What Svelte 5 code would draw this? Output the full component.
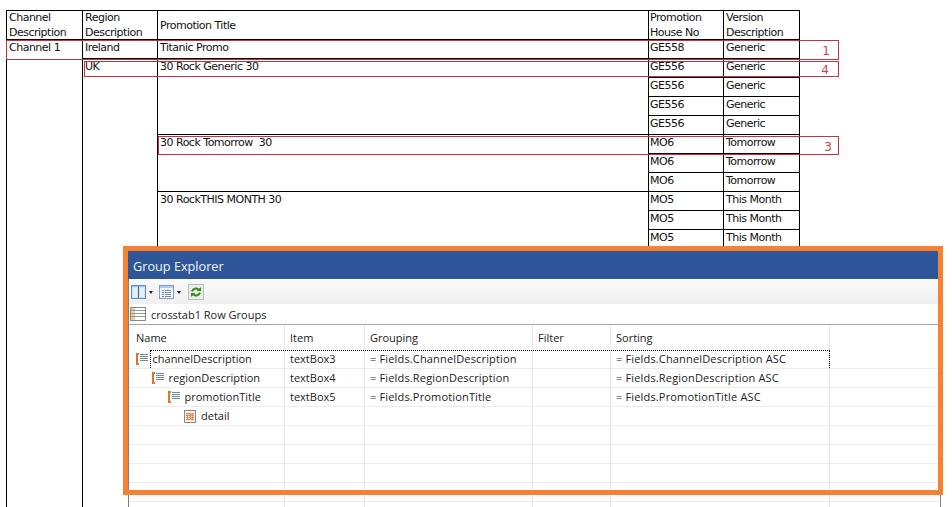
<script>
	const promos = [
		{ title: 'Titanic Promo', house: 'GE558', version: 'Generic', count: 1, region: 'Ireland' },
		{ title: '30 Rock Generic 30', house: 'GE556', version: 'Generic', count: 4, region: 'UK' },
		{ title: '30 Rock Tomorrow  30', house: 'MO6', version: 'Tomorrow', count: 3 },
		{ title: '30 RockTHIS MONTH 30', house: 'MO5', version: 'This Month', count: 3 }
	];

	const notes = [
		{ id: 'one', label: '1' },
		{ id: 'four', label: '4' },
		{ id: 'three', label: '3' }
	];

	const groups = [
		{ name: 'channelDescription', item: 'textBox3', field: 'ChannelDescription', depth: 0 },
		{ name: 'regionDescription', item: 'textBox4', field: 'RegionDescription', depth: 1 },
		{ name: 'promotionTitle', item: 'textBox5', field: 'PromotionTitle', depth: 2 }
	];

	const ukRows = promos.slice(1).reduce((sum, p) => sum + p.count, 0);
	const totalRows = promos.reduce((sum, p) => sum + p.count, 0);
	const emptyRows = [0, 1, 2, 3, 4];
</script>

<div class="page">
	<table class="report">
		<colgroup>
			<col style="width:76px" />
			<col style="width:75px" />
			<col style="width:491px" />
			<col style="width:75px" />
			<col style="width:76px" />
		</colgroup>
		<thead>
			<tr>
				<th><span class="two">Channel<br />Description</span></th>
				<th><span class="two">Region<br />Description</span></th>
				<th>Promotion Title</th>
				<th><span class="two">Promotion<br />House No</span></th>
				<th><span class="two">Version<br />Description</span></th>
			</tr>
		</thead>
		<tbody>
			{#each promos as promo, p}
				{#each Array(promo.count) as _, i}
					<tr>
						{#if p === 0}
							<td rowspan={totalRows + 1}>Channel 1</td>
						{/if}
						{#if i === 0 && promo.region}
							<td rowspan={promo.region === 'UK' ? ukRows + 1 : 1}>{promo.region}</td>
						{/if}
						{#if i === 0}
							<td rowspan={promo.count}>{promo.title}</td>
						{/if}
						<td>{promo.house}</td>
						<td>{promo.version}</td>
					</tr>
				{/each}
			{/each}
			<tr class="filler"><td colspan="3" class="blank"></td></tr>
		</tbody>
	</table>

	{#each notes as note}
		<div class="note {note.id}">{note.label}</div>
	{/each}

	<section class="explorer">
		<h2 class="title">Group Explorer</h2>
		<div class="toolbar">
			<svg width="15" height="14" viewBox="0 0 15 14">
				<rect x="0.500" y="0.500" width="14" height="13" fill="#cfe0f3" stroke="#5f8fc6" />
				<rect x="1" y="1" width="13" height="1" fill="#a9c4e4" />
				<rect x="7" y="1" width="1" height="12" fill="#3f6fa8" />
				<rect x="2" y="3" width="4" height="9" fill="#e6f0fa" />
				<rect x="9" y="3" width="4" height="9" fill="#e6f0fa" />
			</svg>
			<span class="caret"></span>
			<svg class="second" width="15" height="14" viewBox="0 0 15 14">
				<rect x="0.500" y="0.500" width="14" height="13" fill="#eef3f9" stroke="#7f9fc4" />
				<rect x="1" y="1" width="13" height="2" fill="#b4cbe3" />
				<path d="M3 5.500h2M6 5.500h6M3 7.500h2M6 7.500h6M3 9.500h2M6 9.500h6M3 11.500h2M6 11.500h6" stroke="#7f8c9a" fill="none" />
			</svg>
			<span class="caret"></span>
			<span class="refresh">
				<svg width="14" height="14" viewBox="0 0 14 14">
					<path d="M3 6.500A4 4 0 0 1 9.500 4.500" fill="none" stroke="#2c8a2c" stroke-width="2" />
					<path d="M11 7.500A4 4 0 0 1 4.500 9.500" fill="none" stroke="#2c8a2c" stroke-width="2" />
					<path d="M7.500 6h4.500v-4z" fill="#2c8a2c" />
					<path d="M6.500 8H2v4z" fill="#2c8a2c" />
				</svg>
			</span>
		</div>
		<div class="crumb">
			<svg width="16" height="14" viewBox="0 0 16 14">
				<rect x="0.500" y="0.500" width="15" height="13" fill="#fff" stroke="#8a8a78" />
				<rect x="1" y="1" width="4" height="12" fill="#e8cf9a" />
				<path d="M1 3.500h14M1 6.500h14M1 9.500h14" stroke="#8f98a3" fill="none" />
			</svg>
			<span>crosstab1 Row Groups</span>
		</div>
		<div class="grid">
			<div class="row head">
				<div class="cell name">Name</div>
				<div class="cell">Item</div>
				<div class="cell">Grouping</div>
				<div class="cell">Filter</div>
				<div class="cell">Sorting</div>
				<div class="cell"></div>
			</div>
			{#each groups as group, g}
				<div class="row" class:focused={g === 0}>
					<div class="cell name">
						<span class="tree" style="margin-left: {group.depth * 16}px">
							<span class="bracket"></span>
							<svg width="8" height="9" viewBox="0 0 8 9">
								<path d="M0 1.500h8M0 3.500h8M0 5.500h8M0 7.500h8" stroke="#6f8a98" fill="none" />
							</svg>
						</span>
						<span>{group.name}</span>
					</div>
					<div class="cell">{group.item}</div>
					<div class="cell expr">= Fields.{group.field}</div>
					<div class="cell"></div>
					<div class="cell expr">= Fields.{group.field} ASC</div>
					<div class="cell"></div>
				</div>
			{/each}
			<div class="row">
				<div class="cell name">
					<span class="detail">
						<svg width="12" height="13" viewBox="0 0 12 13">
							<rect x="0.500" y="0.500" width="11" height="12" fill="#fdf0e6" stroke="#8a8a8a" />
							<path d="M2 3.500h8M2 5.500h8M2 7.500h8M2 9.500h8M3.500 3v7M6.500 3v7M8.500 3v7" stroke="#e08a5c" fill="none" />
						</svg>
					</span>
					<span>detail</span>
				</div>
				<div class="cell"></div>
				<div class="cell"></div>
				<div class="cell"></div>
				<div class="cell"></div>
				<div class="cell"></div>
			</div>
			{#each emptyRows as r}
				<div class="row">
					<div class="cell name"></div>
					<div class="cell"></div>
					<div class="cell"></div>
					<div class="cell"></div>
					<div class="cell"></div>
					<div class="cell"></div>
				</div>
			{/each}
		</div>
	</section>
	<div class="highlight"></div>
</div>

<style>
	:global(body) {
		margin: 0;
		background: #fff;
	}

	.page {
		position: relative;
		width: 952px;
		height: 507px;
		overflow: hidden;
		padding: 10px 0 0 6px;
		box-sizing: border-box;
		background: #fff;
		font-family: 'Noto Sans', 'Liberation Sans', sans-serif;
	}

	.report {
		border-collapse: collapse;
		table-layout: fixed;
		width: 793px;
		font-family: 'DejaVu Sans', sans-serif;
		font-size: 11px;
		letter-spacing: -0.5px;
		color: #111;
	}

	.report th,
	.report td {
		border: 1px solid #000;
		padding: 0 0 0 2px;
		font-weight: normal;
		text-align: left;
		line-height: 15px;
		white-space: pre;
	}

	.report tr > :nth-last-child(2) {
		padding-left: 1px;
	}

	.report th {
		height: 28px;
		vertical-align: middle;
	}

	.two {
		display: block;
		margin: -1px 0;
		line-height: 15px;
	}

	.report td {
		height: 18px;
		vertical-align: top;
	}

	.report td.blank {
		border: none;
	}

	.report .filler td {
		height: 300px;
	}

	.note {
		position: absolute;
		right: 113px;
		box-sizing: border-box;
		border: 1px solid #c1343f;
		display: flex;
		align-items: center;
		justify-content: flex-end;
		font-family: 'DejaVu Sans', sans-serif;
		font-size: 12px;
		color: #d0404c;
	}

	.note.one {
		left: 6px;
		top: 40px;
		height: 20px;
		padding: 2px 8px 0 0;
	}

	.note.four {
		left: 84px;
		top: 61px;
		height: 16px;
		padding: 2px 9px 0 0;
	}

	.note.three {
		left: 158px;
		top: 136px;
		height: 19px;
		padding: 2px 6px 0 0;
	}

	.explorer {
		position: absolute;
		left: 128px;
		top: 251px;
		width: 813px;
		height: 270px;
		box-sizing: border-box;
		border-left: 1px solid #808080;
		border-right: 1px solid #808080;
		background: #fff;
		color: #222;
		font-size: 11px;
		font-family: 'Open Sans', sans-serif;
	}

	.title {
		margin: 0 0 0 -1px;
		height: 28px;
		padding-left: 5px;
		background: #2e5597;
		color: #f2f5fa;
		font-size: 12.7px;
		font-weight: 400;
		line-height: 31px;
	}

	.toolbar {
		display: flex;
		align-items: center;
		height: 25px;
		padding-left: 2px;
		background: linear-gradient(#fafafa, #efefef);
	}

	.caret {
		width: 0;
		height: 0;
		margin: 1px 3px 0 3px;
		border-left: 2.500px solid transparent;
		border-right: 2.500px solid transparent;
		border-top: 3px solid #222;
	}

	.second {
		margin-left: 3px;
	}

	.refresh {
		display: flex;
		margin-left: 4px;
		border: 1px solid #a9c0da;
		background: #f1efdc;
	}

	.crumb {
		display: flex;
		align-items: center;
		gap: 5px;
		height: 20px;
		padding-left: 1px;
		border-bottom: 1px solid #a6a6a6;
	}

	.row {
		position: relative;
		display: grid;
		grid-template-columns: 156px 80px 168px 78px 219px 1fr;
		height: 19px;
		box-sizing: border-box;
		border-bottom: 1px solid #ececec;
		line-height: 18px;
	}

	.row.head {
		height: 25px;
		border-bottom: none;
		line-height: 26px;
	}

	.row.focused::after {
		content: '';
		position: absolute;
		left: 21px;
		top: 0;
		width: 680px;
		height: 18px;
		box-sizing: border-box;
		border: 1px dotted #000;
		border-bottom: none;
	}

	.cell {
		display: flex;
		align-items: center;
		padding-left: 5px;
		border-right: 1px solid #e6e6e6;
		white-space: nowrap;
		overflow: hidden;
	}

	.cell:last-child {
		border-right: none;
	}

	.cell.name {
		padding-left: 7px;
	}

	.cell.expr {
		letter-spacing: 0.16px;
	}

	.tree {
		display: flex;
		align-items: center;
		flex-shrink: 0;
		width: 16.500px;
	}

	.tree svg {
		margin-top: -3px;
	}

	.bracket {
		width: 3px;
		height: 12px;
		box-sizing: border-box;
		border: 2px solid #e0762c;
		border-right: none;
		margin-right: 1px;
	}

	.detail {
		display: flex;
		margin: 0 5px 0 48px;
	}

	.highlight {
		position: absolute;
		left: 123px;
		top: 246px;
		width: 820px;
		height: 249px;
		box-sizing: border-box;
		border: 5px solid #f58233;
	}
</style>
